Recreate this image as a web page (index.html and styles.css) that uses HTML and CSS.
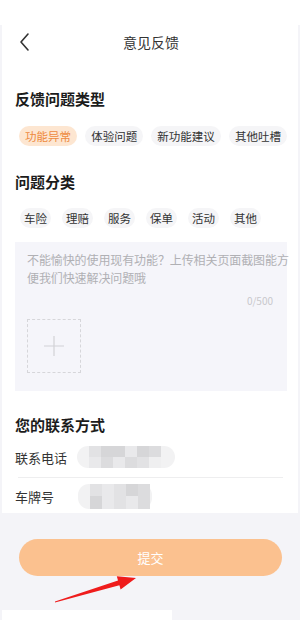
FILE: index.html
```html
<!DOCTYPE html>
<html lang="zh">
<head>
<meta charset="utf-8">
<title>意见反馈</title>
<link rel="stylesheet" href="styles.css">
</head>
<body>
<div class="topbar"></div>
<div class="card">
  <div class="header">
    <svg class="back" width="14" height="20" viewBox="0 0 14 20"><path d="M10 2 L3 10 L10 18" fill="none" stroke="#333" stroke-width="1.6" stroke-linecap="round" stroke-linejoin="round"/></svg>
    <div class="title">意见反馈</div>
  </div>

  <div class="sec-title first">反馈问题类型</div>
  <div class="chips chips-type">
    <span class="chip active">功能异常</span>
    <span class="chip">体验问题</span>
    <span class="chip">新功能建议</span>
    <span class="chip">其他吐槽</span>
  </div>

  <div class="sec-title second">问题分类</div>
  <div class="chips chips-cat">
    <span class="chip small">车险</span>
    <span class="chip small">理赔</span>
    <span class="chip small">服务</span>
    <span class="chip small">保单</span>
    <span class="chip small">活动</span>
    <span class="chip small">其他</span>
  </div>

  <div class="textbox">
    <div class="placeholder">不能愉快的使用现有功能？上传相关页面截图能方<br>便我们快速解决问题哦</div>
    <div class="counter">0/500</div>
    <div class="upload">
      <svg width="22" height="22" viewBox="0 0 22 22"><path d="M11 1 V21 M1 11 H21" stroke="#d2d2d6" stroke-width="1.2"/></svg>
    </div>
  </div>

  <div class="sec-title third">您的联系方式</div>
  <div class="row">
    <span class="label">联系电话</span>
    <div class="mosaic phone">
      <i class="c2"></i><i class="c1"></i><i class="c1"></i><i class="c3"></i><i class="c1"></i><i class="c4"></i>
      <i class="c3"></i><i class="c4"></i><i class="c3"></i><i class="c4"></i><i class="c2"></i><i class="c5"></i>
    </div>
  </div>
  <div class="divider"></div>
  <div class="row">
    <span class="label">车牌号</span>
    <div class="mosaic plate">
      <i class="c2"></i><i class="c3"></i><i class="c2"></i><i class="c1"></i><i class="c4"></i>
      <i class="c1"></i><i class="c3"></i><i class="c2"></i><i class="c3"></i><i class="c4"></i>
    </div>
  </div>
</div>

<div class="btn-wrap">
  <div class="submit">提交</div>
</div>
<div class="bottom-white"></div>

<svg class="arrow" width="95" height="35" viewBox="0 0 95 35">
  <polygon points="5,29.5 68,8.5 66.8,4.2 86,6 70.6,17.6 69.4,13.3 5,30.5" fill="#ef1c1c"/>
</svg>
</body>
</html>
```

FILE: styles.css
```css
* { box-sizing: border-box; }
html, body { margin: 0; padding: 0; }
body {
  width: 300px;
  height: 620px;
  overflow: hidden;
  position: relative;
  background: #f4f4f8;
  font-family: "Noto Sans CJK SC", "Noto Sans", sans-serif;
  color: #222;
}
.topbar { height: 25px; background: #fff; }
.card {
  margin: 0 2px;
  background: #fff;
  padding: 0 11px 3px 13px;
  height: 488px;
}
.header {
  height: 34px;
  position: relative;
  display: flex;
  align-items: center;
  justify-content: center;
}
.back { position: absolute; left: 3px; top: 7px; }
.title { font-size: 14px; color: #333; line-height: 20px; }

.sec-title {
  font-size: 15px;
  font-weight: 700;
  color: #1c1c1c;
  line-height: 20px;
}
.sec-title.first { margin-top: 30px; }
.sec-title.second { margin-top: 26px; }
.sec-title.third { margin-top: 24px; }

.chips { display: flex; }
.chips-type { margin: 17px 0 0 4px; justify-content: space-between; }
.chips-cat { margin: 16px 0 0 5px; gap: 11px; }
.chip {
  height: 20px;
  line-height: 20px;
  font-size: 11.5px;
  padding: 0 6px;
  border-radius: 10px;
  background: #f5f5f7;
  color: #333;
  white-space: nowrap;
}
.chip.small { padding: 0 4px; }
.chip.active { background: #fde6d1; color: #ee8a3e; }

.textbox {
  margin-top: 14px;
  height: 149px;
  width: 272px;
  background: #f5f5fa;
  padding: 9px 14px 0 12px;
}
.placeholder {
  font-size: 12px;
  line-height: 18px;
  color: #b0b0b4;
  white-space: nowrap;
  letter-spacing: -0.1px;
}
.counter {
  text-align: right;
  font-size: 10px;
  line-height: 14px;
  color: #c8c8cc;
  margin-top: 7px;
}
.upload {
  margin-top: 11px;
  width: 54px;
  height: 54px;
  border: 1px dashed #d6d6da;
  display: flex;
  align-items: center;
  justify-content: center;
}

.row {
  display: flex;
  align-items: center;
  height: 30px;
}
.row:first-of-type { margin-top: 0; }
.sec-title.third + .row { margin-top: 7px; }
.label {
  font-size: 13px;
  color: #333;
  width: 62px;
}
.mosaic {
  display: grid;
  background: #f2f2f3;
  border-radius: 11px;
  padding-left: 12px;
}
.mosaic i { display: block; }
.phone {
  width: 98px;
  height: 22px;
  grid-template-columns: repeat(6, 12px);
  grid-template-rows: 11px 11px;
}
.plate {
  width: 74px;
  height: 25px;
  grid-template-columns: repeat(5, 12px);
  grid-template-rows: 12px 13px;
  margin-left: 1px;
}
.c1 { background: #d6d6d8; }
.c2 { background: #e2e2e4; }
.c3 { background: #e9e9eb; }
.c4 { background: #dcdcde; }
.c5 { background: #efeff0; }
.divider {
  height: 1px;
  background: #eeeeef;
  margin: 5px 4px 3px 3px;
}

.btn-wrap { padding: 26px 18px 0 19px; }
.submit {
  height: 37px;
  border-radius: 18.5px;
  background: #fbc18f;
  color: #fff;
  font-size: 13px;
  display: flex;
  align-items: center;
  justify-content: center;
}
.bottom-white {
  margin: 34px 0 0 2px;
  width: 170px;
  height: 10px;
  background: #fff;
}
.arrow { position: absolute; left: 50px; top: 572px; }
```
